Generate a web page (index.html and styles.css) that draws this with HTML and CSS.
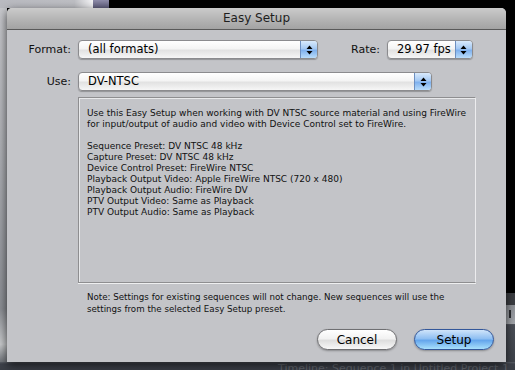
FILE: index.html
```html
<!DOCTYPE html>
<html lang="en">
<head>
    <meta charset="UTF-8">
    <meta name="viewport" content="width=device-width, initial-scale=1.0">
    <title>Easy Setup</title>
    <link rel="stylesheet" href="styles.css">
</head>
<body>
    <div class="desk">
        <!-- bits of the windows behind the sheet -->
        <div class="back-window"></div>
        <div class="back-scroll"></div>
        <div class="back-left"></div>
        <div class="back-right"><span class="mark"></span></div>
        <div class="back-timeline">Timeline: Sequence 1 in Untitled Project 1</div>

        <div class="dialog">
            <div class="titlebar">Easy Setup</div>
            <div class="dialog-body">
                <div class="field-row">
                    <label class="field-label">Format:</label>
                    <div class="popup popup-format">
                        <span class="popup-text">(all formats)</span>
                        <span class="popup-arrows">
                            <svg width="7" height="10" viewBox="0 0 7 10"><path d="M3.5 0.5 L6.5 4 L0.5 4 Z M0.5 6 L6.5 6 L3.5 9.5 Z" fill="#000"/></svg>
                        </span>
                    </div>
                    <label class="field-label rate-label">Rate:</label>
                    <div class="popup popup-rate">
                        <span class="popup-text">29.97 fps</span>
                        <span class="popup-arrows">
                            <svg width="7" height="10" viewBox="0 0 7 10"><path d="M3.5 0.5 L6.5 4 L0.5 4 Z M0.5 6 L6.5 6 L3.5 9.5 Z" fill="#000"/></svg>
                        </span>
                    </div>
                </div>
                <div class="field-row use-row">
                    <label class="field-label">Use:</label>
                    <div class="popup popup-use">
                        <span class="popup-text">DV-NTSC</span>
                        <span class="popup-arrows">
                            <svg width="7" height="10" viewBox="0 0 7 10"><path d="M3.5 0.5 L6.5 4 L0.5 4 Z M0.5 6 L6.5 6 L3.5 9.5 Z" fill="#000"/></svg>
                        </span>
                    </div>
                </div>

                <div class="info-box">
                    <p>Use this Easy Setup when working with DV NTSC source material and using FireWire<br>for input/output of audio and video with Device Control set to FireWire.</p>
                    <p>Sequence Preset: DV NTSC 48 kHz<br>
                    Capture Preset: DV NTSC 48 kHz<br>
                    Device Control Preset: FireWire NTSC<br>
                    Playback Output Video: Apple FireWire NTSC (720 x 480)<br>
                    Playback Output Audio: FireWire DV<br>
                    PTV Output Video: Same as Playback<br>
                    PTV Output Audio: Same as Playback</p>
                </div>

                <p class="note">Note: Settings for existing sequences will not change. New sequences will use the<br>settings from the selected Easy Setup preset.</p>

                <div class="buttons">
                    <button class="btn">Cancel</button>
                    <button class="btn btn-default">Setup</button>
                </div>
            </div>
        </div>
    </div>
</body>
</html>
```

FILE: styles.css
```css
body {
    margin: 0;
    background-color: black;
    font-family: "DejaVu Sans", Verdana, sans-serif;
}
.desk {
    position: relative;
    width: 515px;
    height: 370px;
    overflow: hidden;
    background-color: black;
}
.back-window {
    position: absolute;
    left: 0;
    top: 0;
    width: 93px;
    height: 8px;
    background: linear-gradient(to right, #b9bac0 0%, #bdbec3 80%, #f4f4f6 100%);
}
.back-scroll {
    position: absolute;
    left: 93px;
    top: 0;
    width: 16px;
    height: 8px;
    background: linear-gradient(#8f8daa, #5f5d7c);
}
.back-left {
    position: absolute;
    left: 0;
    top: 8px;
    width: 7px;
    height: 354px;
    background: linear-gradient(#c6c7cb 0%, #aeb0b5 40%, #8b8e94 85%, #c9cbcd 95%, #70747a 100%);
}
.back-right {
    position: absolute;
    right: 0;
    top: 293px;
    width: 9px;
    height: 77px;
    background: linear-gradient(#3b3d42 0%, #3b3d42 15%, #8e9197 16%, #a2a5aa 40%, #4a4e56 41%, #3c4048 100%);
}
.back-right .mark {
    position: absolute;
    left: 3px;
    top: 17px;
    width: 2px;
    height: 8px;
    background-color: #2b2d31;
}
.back-timeline {
    position: absolute;
    left: 0;
    top: 362px;
    width: 515px;
    height: 8px;
    box-sizing: border-box;
    padding-left: 278px;
    background: linear-gradient(#5a5e66 0px, #3e424b 2px, #3a3e46 100%);
    color: #62666e;
    font-size: 11px;
    line-height: 13px;
    white-space: nowrap;
    overflow: hidden;
}
.dialog {
    position: absolute;
    left: 7px;
    top: 8px;
    width: 499px;
    height: 354px;
    background-color: #c3c4c8;
    border-radius: 5px 5px 0 0;
    box-shadow: 0 3px 10px rgba(0, 0, 0, 0.7);
    overflow: hidden;
}
.titlebar {
    height: 21px;
    line-height: 20px;
    text-align: center;
    font-size: 12px;
    color: #1e1e1e;
    background: linear-gradient(#cbcbcb, #b6b6b6 50%, #a3a3a3);
    border-bottom: 1px solid #5a5a5a;
}
.dialog-body {
    padding-top: 10px;
}
.field-row {
    display: flex;
    align-items: center;
    height: 19px;
}
.use-row {
    margin-top: 13px;
}
.field-label {
    width: 64px;
    margin-right: 7px;
    text-align: right;
    font-size: 11px;
    color: #111;
}
.rate-label {
    width: auto;
    margin-left: 33px;
}
.popup {
    display: flex;
    align-items: stretch;
    height: 19px;
    box-sizing: border-box;
    border: 1px solid #8b8b8e;
    border-radius: 4px;
    background: linear-gradient(#ffffff 0%, #f4f4f4 45%, #e2e2e2 55%, #f6f6f6 100%);
    box-shadow: 0 1px 1px rgba(0, 0, 0, 0.25);
    overflow: hidden;
}
.popup-format {
    width: 240px;
}
.popup-rate {
    width: 86px;
}
.popup-use {
    width: 354px;
}
.popup-text {
    flex: 1;
    padding-left: 9px;
    font-size: 11.5px;
    line-height: 17px;
    color: #000;
    white-space: nowrap;
}
.popup-arrows {
    width: 16px;
    display: flex;
    align-items: center;
    justify-content: center;
    border-left: 1px solid #6d8fc0;
    background: linear-gradient(#d9eafc 0%, #a5c9f3 45%, #7fb1ee 55%, #b9dcfa 100%);
}
.info-box {
    margin: 6px 0 0 71px;
    width: 398px;
    height: 186px;
    box-sizing: border-box;
    padding: 10px 8px;
    border: 1px solid #8e8e90;
    border-right-color: #ececee;
    border-bottom-color: #8e8e90;
    box-shadow: inset 1px 1px 0 #e8e9eb, 0 1px 0 #eeeff0;
    font-size: 9px;
    line-height: 11px;
    color: #111;
    white-space: nowrap;
}
.info-box p {
    margin: 0 0 11px 0;
}
.note {
    margin: 8px 0 0 80px;
    font-size: 8.7px;
    line-height: 12px;
    color: #111;
    white-space: nowrap;
}
.buttons {
    display: flex;
    justify-content: flex-end;
    gap: 17px;
    margin-top: 14px;
    padding-right: 12px;
}
.btn {
    width: 80px;
    height: 21px;
    padding: 0;
    border: 1px solid #6f6f72;
    border-radius: 11px;
    background: linear-gradient(#ffffff 0%, #f2f2f2 45%, #dedede 55%, #f8f8f8 100%);
    box-shadow: 0 1px 2px rgba(0, 0, 0, 0.3);
    font-family: "DejaVu Sans", Verdana, sans-serif;
    font-size: 12px;
    color: #000;
}
.btn-default {
    border-color: #33579a;
    background: linear-gradient(#cfe4fa 0%, #8fbff2 45%, #65a6ec 55%, #a8e0fc 100%);
}
```
